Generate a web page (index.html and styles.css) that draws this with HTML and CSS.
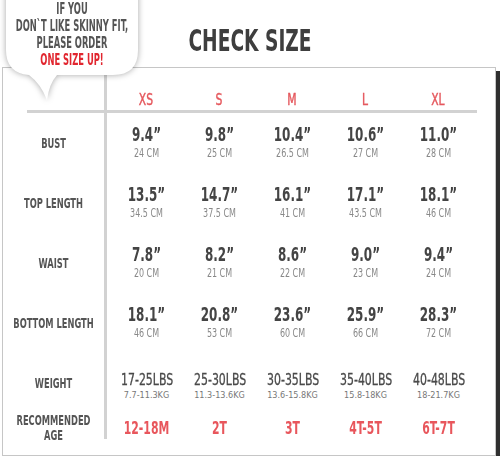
FILE: index.html
```html
<!DOCTYPE html>
<html lang="en">
<head>
  <meta charset="UTF-8" />
  <meta name="viewport" content="width=device-width, initial-scale=1" />
  <title>Check Size</title>
  <link rel="stylesheet" href="styles.css">
</head>
<body>
  <div class="page">
    <!-- speech bubble over the top left corner -->
    <div class="bubble">
      <svg class="bubble-shape" width="150" height="110" viewBox="0 0 150 110">
        <path d="M6 -30 H138 V50 Q138 75 113 75 H57 Q49 84 47 100 Q41 84 29 75 Q6 73 6 50 Z" fill="#fff" />
      </svg>
      <p class="bubble-text">IF YOU<br>DON`T LIKE SKINNY FIT,<br>PLEASE ORDER<br><span class="hot">ONE SIZE UP!</span></p>
    </div>

    <h1 class="title">CHECK SIZE</h1>

    <div class="chart">
      <div class="divider"></div>
      <div class="rule"></div>

      <!-- header -->
      <div class="label"></div>
      <div class="size">XS</div>
      <div class="size">S</div>
      <div class="size">M</div>
      <div class="size">L</div>
      <div class="size">XL</div>

      <!-- bust -->
      <div class="label"><p>BUST</p></div>
      <div class="cell"><p class="inch">9.4”</p><p class="cm">24 CM</p></div>
      <div class="cell"><p class="inch">9.8”</p><p class="cm">25 CM</p></div>
      <div class="cell"><p class="inch">10.4”</p><p class="cm">26.5 CM</p></div>
      <div class="cell"><p class="inch">10.6”</p><p class="cm">27 CM</p></div>
      <div class="cell"><p class="inch">11.0”</p><p class="cm">28 CM</p></div>

      <!-- top length -->
      <div class="label"><p>TOP LENGTH</p></div>
      <div class="cell"><p class="inch">13.5”</p><p class="cm">34.5 CM</p></div>
      <div class="cell"><p class="inch">14.7”</p><p class="cm">37.5 CM</p></div>
      <div class="cell"><p class="inch">16.1”</p><p class="cm">41 CM</p></div>
      <div class="cell"><p class="inch">17.1”</p><p class="cm">43.5 CM</p></div>
      <div class="cell"><p class="inch">18.1”</p><p class="cm">46 CM</p></div>

      <!-- waist -->
      <div class="label"><p>WAIST</p></div>
      <div class="cell"><p class="inch">7.8”</p><p class="cm">20 CM</p></div>
      <div class="cell"><p class="inch">8.2”</p><p class="cm">21 CM</p></div>
      <div class="cell"><p class="inch">8.6”</p><p class="cm">22 CM</p></div>
      <div class="cell"><p class="inch">9.0”</p><p class="cm">23 CM</p></div>
      <div class="cell"><p class="inch">9.4”</p><p class="cm">24 CM</p></div>

      <!-- bottom length -->
      <div class="label"><p>BOTTOM LENGTH</p></div>
      <div class="cell"><p class="inch">18.1”</p><p class="cm">46 CM</p></div>
      <div class="cell"><p class="inch">20.8”</p><p class="cm">53 CM</p></div>
      <div class="cell"><p class="inch">23.6”</p><p class="cm">60 CM</p></div>
      <div class="cell"><p class="inch">25.9”</p><p class="cm">66 CM</p></div>
      <div class="cell"><p class="inch">28.3”</p><p class="cm">72 CM</p></div>

      <!-- weight -->
      <div class="label"><p>WEIGHT</p></div>
      <div class="cell weight"><p class="lbs">17-25LBS</p><p class="kg">7.7-11.3KG</p></div>
      <div class="cell weight"><p class="lbs">25-30LBS</p><p class="kg">11.3-13.6KG</p></div>
      <div class="cell weight"><p class="lbs">30-35LBS</p><p class="kg">13.6-15.8KG</p></div>
      <div class="cell weight"><p class="lbs">35-40LBS</p><p class="kg">15.8-18KG</p></div>
      <div class="cell weight"><p class="lbs">40-48LBS</p><p class="kg">18-21.7KG</p></div>

      <!-- age -->
      <div class="label"><p>RECOMMENDED<br>AGE</p></div>
      <div class="cell"><p class="age">12-18M</p></div>
      <div class="cell"><p class="age">2T</p></div>
      <div class="cell"><p class="age">3T</p></div>
      <div class="cell"><p class="age">4T-5T</p></div>
      <div class="cell"><p class="age">6T-7T</p></div>
    </div>
  </div>
</body>
</html>
```

FILE: styles.css
```css
/* Reset & base */
* {
  margin: 0;
  padding: 0;
  box-sizing: border-box;
}

body {
  font-family: "DejaVu Sans Condensed", "Liberation Sans", sans-serif;
  background-color: #fff;
  color: #444;
  overflow: hidden;
}

.page {
  position: relative;
  padding-top: 26px;
}

/* Speech bubble */
.bubble {
  position: absolute;
  top: 0;
  left: 0;
  width: 150px;
  height: 110px;
  z-index: 2;
}

.bubble-shape {
  position: absolute;
  top: 0;
  left: 0;
  overflow: visible;
  filter: drop-shadow(0 0 3px rgba(0, 0, 0, 0.35));
}

/* wide box, squeezed to the bubble's width */
.bubble-text {
  position: relative;
  width: 200px;
  margin-left: -28px;
  padding-top: 1px;
  font-size: 15px;
  line-height: 17px;
  font-weight: 700;
  color: #545454;
  text-align: center;
  white-space: nowrap;
  transform: scaleX(0.62);
}

.bubble-text .hot {
  color: #e1262f;
}

/* Title */
.title {
  font-size: 30px;
  line-height: 30px;
  font-weight: 700;
  color: #3e3e3e;
  text-align: center;
  margin-bottom: 11px;
  transform: scaleX(0.69);
}

/* Chart card */
.chart {
  width: 494px;
  margin-left: 2px;
  border: 1px solid #c6c6c6;
  box-shadow: 4px 4px 0 #2f2f2f;
  padding-bottom: 12px;
  display: grid;
  grid-template-columns: 101px 3px repeat(5, 73px);
  grid-template-rows: 42px 3px repeat(5, 60px) 30px;
}

.divider {
  grid-column: 2;
  grid-row: 1 / -1;
  background-color: #d2d2d2;
  margin-top: -1px;
  margin-bottom: 4px;
}

.rule {
  grid-column: 1 / -1;
  grid-row: 2;
  background-color: #d2d2d2;
  margin: 0 -5px 0 24px;
}

.size {
  display: flex;
  align-items: flex-end;
  justify-content: center;
  padding: 0 0 2px 6px;
  font-size: 15px;
  line-height: 15px;
  color: #e5585d;
  -webkit-text-stroke: 0.4px #e5585d;
  transform: scaleX(0.8);
}

.label {
  display: flex;
  flex-direction: column;
  justify-content: center;
  text-align: center;
  font-size: 14px;
  line-height: 15px;
  font-weight: 700;
  color: #555;
}

.label p {
  margin: 0 -30px;
  transform: scaleX(0.66);
  white-space: nowrap;
}

.cell {
  display: flex;
  flex-direction: column;
  justify-content: center;
  text-align: center;
  padding-left: 6px;
  white-space: nowrap;
}

.inch {
  font-size: 19px;
  line-height: 17px;
  font-weight: 700;
  color: #444;
  transform: scaleX(0.7);
}

.cm {
  margin-top: 3.5px;
  font-size: 12px;
  line-height: 13px;
  color: #888;
  transform: scaleX(0.74);
}

.weight {
  padding-top: 6px;
}

.lbs {
  font-size: 16px;
  line-height: 16px;
  color: #4a4a4a;
  -webkit-text-stroke: 0.3px #4a4a4a;
  transform: scaleX(0.76);
}

.kg {
  margin-top: 2px;
  font-size: 9px;
  line-height: 10px;
  color: #777;
}

.age {
  font-size: 17px;
  line-height: 17px;
  font-weight: 700;
  color: #e8565c;
  transform: scaleX(0.71);
}
```
